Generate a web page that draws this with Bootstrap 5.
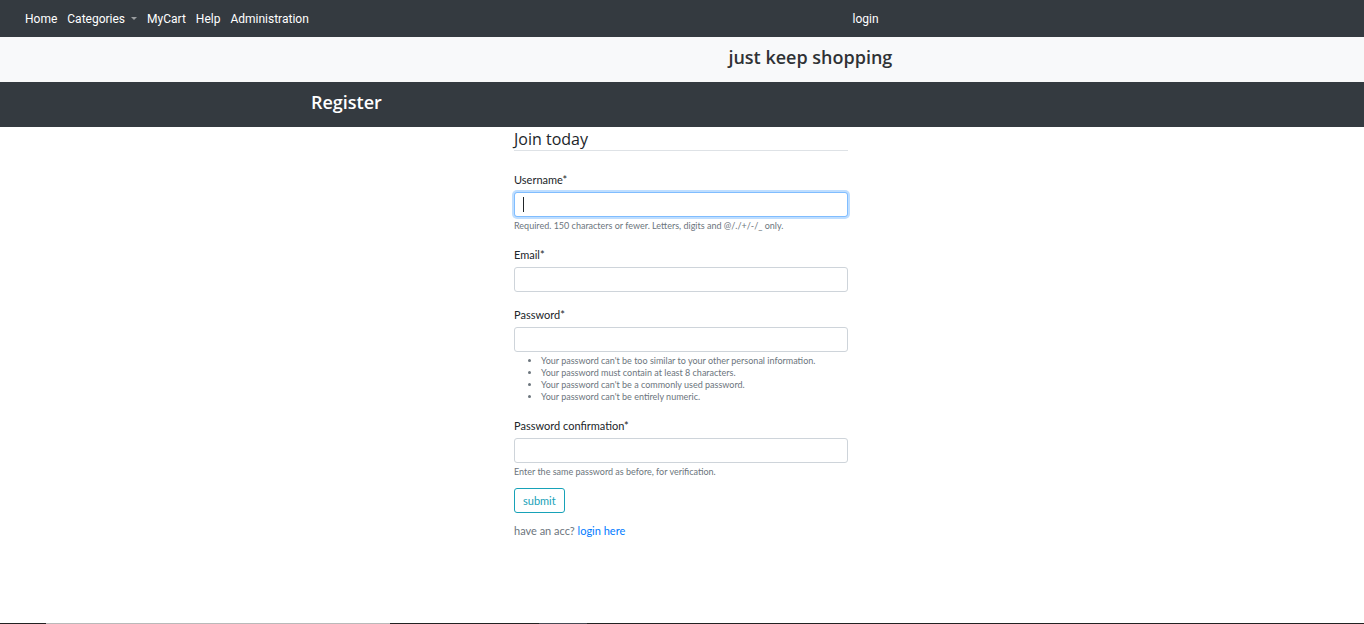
<!DOCTYPE html>
<html lang="en">
<head>
<meta charset="utf-8">
<meta name="viewport" content="width=device-width, initial-scale=1">
<title>Register</title>
<link href="https://cdn.jsdelivr.net/npm/bootstrap@5.3.0/dist/css/bootstrap.min.css" rel="stylesheet">
<style>
  body { font-family: Lato, "Open Sans", sans-serif; font-size: 11px; line-height: 16px; color: #212529; }
  .bar-dark { background: #343a40; }
  .bar-light { background: #f8f9fa; }
  .topnav { height: 37px; padding-left: 25px; font-family: Roboto, sans-serif; }
  .topnav .nav { width: 61.8%; gap: 10px; }
  .topnav .nav-link { padding: 0; font-size: 12px; color: #fff; white-space: nowrap; }
  .topnav .dropdown-toggle::after { color: #9a9da0; border-width: 3px 3px 0; margin-left: 6px; vertical-align: 3px; }
  .band { height: 45px; padding-top: 8px; font-family: "Open Sans", sans-serif; }
  .band h1, .band h2 { font-size: 18px; line-height: 24px; font-weight: 600; margin: 0; }
  .band h1 { color: #2f3235; }
  .tagline { padding-left: 53.4%; }
  .page-width { max-width: 762px; padding: 0 12px 0 10px; }
  .signup { max-width: 334px; }
  .signup legend { font-family: "Open Sans", sans-serif; font-size: 16px; line-height: 23px; padding-top: 1px; height: 24px; margin-bottom: 21px; border-bottom: 1px solid #dee2e6; }
  .signup .field { margin-bottom: 15px; }
  .signup .field:last-of-type { margin-bottom: 10px; }
  .signup .form-label { display: block; margin-bottom: 4px; }
  .signup .form-control { height: 25px; min-height: 0; padding: 4px 8px; font-size: 11px; line-height: 16px; border-color: #ced4da; border-radius: 3px; }
  .signup .form-control.active-field { border-color: #80bdff; box-shadow: 0 0 0 2px #bfdeff; caret-color: transparent; }
  .caret { left: 9px; top: 5px; width: 1px; height: 15px; background: #212529; }
  .hint { margin: 3px 0 0; font-size: 9px; line-height: 12px; color: #6c757d; }
  ul.hint { padding-left: 27px; }
  .btn-submit { height: 25px; padding: 0 8px; font-size: 11px; line-height: 16px; color: #17a2b8; border: 1px solid #17a2b8; border-radius: 3px; }
  .btn-submit:hover { color: #fff; background: #17a2b8; }
  .account { margin-top: 10px; color: #6c757d; }
  .account a { color: #007bff; }
  .taskbar-edge { height: 1px; background: linear-gradient(90deg, #222 46px, #b9b9b9 46px 390px, #222 390px 539px, #474a54 539px 587px, #222 587px); }
</style>
</head>
<body class="d-flex flex-column min-vh-100 bg-white">
<header>
  <nav class="topnav bar-dark d-flex align-items-center" aria-label="Main">
    <ul class="nav flex-nowrap">
      <li class="nav-item"><a class="nav-link" href="#">Home</a></li>
      <li class="nav-item dropdown">
        <a class="nav-link dropdown-toggle" href="#" data-bs-toggle="dropdown" aria-expanded="false">Categories</a>
      </li>
      <li class="nav-item"><a class="nav-link" href="#">MyCart</a></li>
      <li class="nav-item"><a class="nav-link" href="#">Help</a></li>
      <li class="nav-item"><a class="nav-link" href="#">Administration</a></li>
    </ul>
    <a class="nav-link" href="#">login</a>
  </nav>
  <div class="band bar-light"><h1 class="tagline text-nowrap">just keep shopping</h1></div>
  <div class="band bar-dark text-white">
    <div class="container page-width"><h2>Register</h2></div>
  </div>
</header>
<main class="container page-width flex-grow-1">
  <form class="signup mx-auto">
    <fieldset>
      <legend>Join today</legend>
      <div class="field">
        <label class="form-label" for="username">Username*</label>
        <div class="position-relative">
          <input class="form-control active-field" type="text" id="username" maxlength="150" aria-describedby="username-hint">
          <span class="caret position-absolute" aria-hidden="true"></span>
        </div>
        <p class="hint" id="username-hint">Required. 150 characters or fewer. Letters, digits and @/./+/-/_ only.</p>
      </div>
      <div class="field">
        <label class="form-label" for="email">Email*</label>
        <input class="form-control" type="email" id="email">
      </div>
      <div class="field">
        <label class="form-label" for="password1">Password*</label>
        <input class="form-control" type="password" id="password1" aria-describedby="password-hint">
        <ul class="hint" id="password-hint">
          <li>Your password can't be too similar to your other personal information.</li>
          <li>Your password must contain at least 8 characters.</li>
          <li>Your password can't be a commonly used password.</li>
          <li>Your password can't be entirely numeric.</li>
        </ul>
      </div>
      <div class="field">
        <label class="form-label" for="password2">Password confirmation*</label>
        <input class="form-control" type="password" id="password2" aria-describedby="confirm-hint">
        <p class="hint" id="confirm-hint">Enter the same password as before, for verification.</p>
      </div>
    </fieldset>
    <button class="btn btn-submit d-block" type="submit">submit</button>
    <p class="account mb-0">have an acc? <a class="text-decoration-none" href="#">login here</a></p>
  </form>
</main>
<div class="taskbar-edge"></div>
<script src="https://cdn.jsdelivr.net/npm/bootstrap@5.3.0/dist/js/bootstrap.bundle.min.js"></script>
</body>
</html>
